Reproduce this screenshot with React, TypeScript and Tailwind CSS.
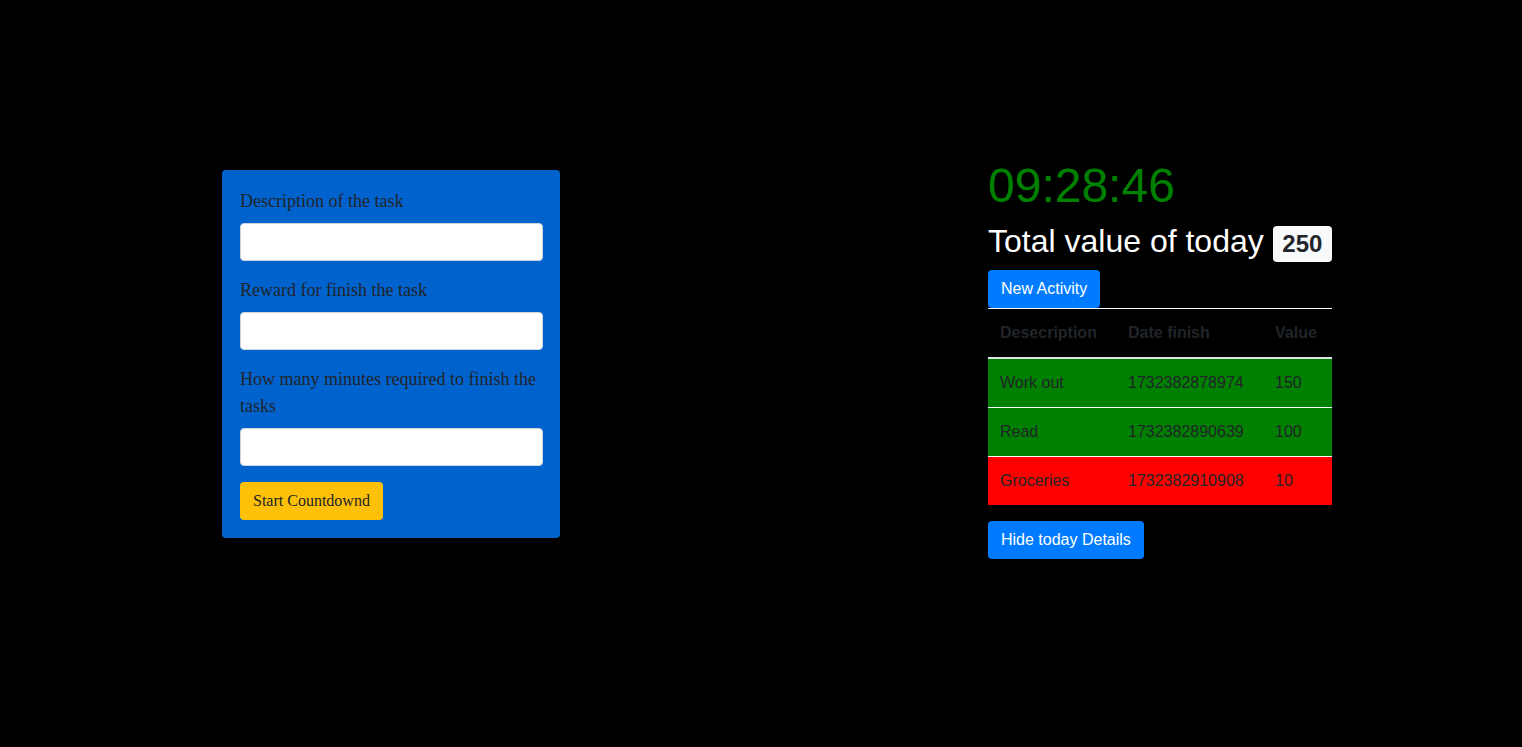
import { FC } from 'react';

type Activity = { description: string; date: number; value: number; done: boolean };

const activities: Activity[] = [
  { description: 'Work out', date: 1732382878974, value: 150, done: true },
  { description: 'Read', date: 1732382890639, value: 100, done: true },
  { description: 'Groceries', date: 1732382910908, value: 10, done: false },
];

const Field: FC<{ label: string }> = ({ label }) => (
  <div className="mb-4">
    <label className="block mb-2 text-[18px] leading-[27px] text-[#212529]">{label}</label>
    <input
      type="text"
      className="block w-full h-[38px] rounded-[4px] border border-[#ced4da] bg-white px-3"
    />
  </div>
);

const App: FC = () => {
  return (
    <div className="min-h-[747px] w-full bg-black font-['Liberation_Sans',Arial,sans-serif]">
      <div className="flex pt-[157px]">
        <div className="ml-[222px] w-[338px] mt-[13px] self-start rounded-[4px] bg-[#0062cc] py-[18px] pl-[18px] pr-[17px] font-['Liberation_Serif','Times_New_Roman',serif]">
          <Field label="Description of the task" />
          <Field label="Reward for finish the task" />
          <Field label="How many minutes required to finish the tasks" />
          <button className="h-[38px] rounded-[4px] bg-[#ffc107] px-[13px] text-[16px] text-[#212529]">
            Start Countdownd
          </button>
        </div>

        <div className="ml-[428px] w-[344px]">
          <div className="text-[48px] leading-[57.6px] text-[#008000]">09:28:46</div>
          <div className="mt-[7px] flex h-[40px] items-baseline text-[32px] leading-[38.4px] text-white">
            Total value of today
            <span className="ml-[9px] rounded-[4px] bg-[#f8f9fa] px-[9.6px] py-[6px] text-[24px] font-bold leading-none text-[#212529]">
              250
            </span>
          </div>
          <button className="mt-[8px] h-[38px] rounded-[4px] bg-[#007bff] px-[13px] text-[16px] text-white">
            New Activity
          </button>
          <table className="w-full border-collapse text-[16px] text-[#212529]">
            <thead>
              <tr className="border-t border-white">
                <th className="h-[50px] w-[128px] px-3 text-left font-bold">Desecription</th>
                <th className="w-[147px] px-3 text-left font-bold">Date finish</th>
                <th className="px-3 text-left font-bold">Value</th>
              </tr>
            </thead>
            <tbody>
              {activities.map((item, index) => (
                <tr
                  key={index}
                  className={`border-t ${index === 0 ? 'border-t-2 border-[#dee2e6]' : 'border-white'} ${
                    item.done ? 'bg-[#008000]' : 'bg-[#ff0000]'
                  }`}
                >
                  <td className="h-[49px] px-3">{item.description}</td>
                  <td className="px-3">{item.date}</td>
                  <td className="px-3">{item.value}</td>
                </tr>
              ))}
            </tbody>
          </table>
          <button className="mt-4 h-[38px] rounded-[4px] bg-[#007bff] px-[13px] text-[16px] text-white">
            Hide today Details
          </button>
        </div>
      </div>
    </div>
  );
};

export default App;
